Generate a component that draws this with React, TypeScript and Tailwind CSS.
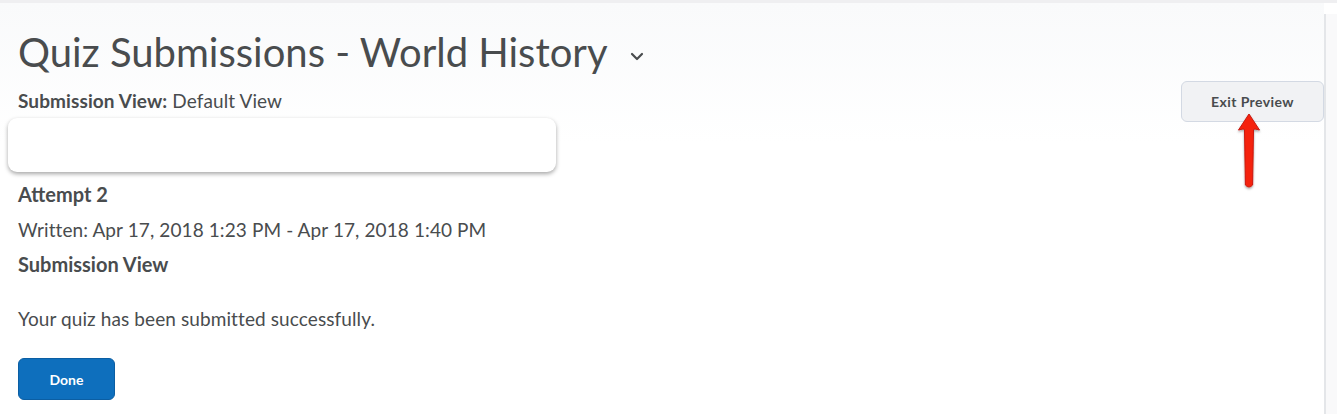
export default function App() {
  return (
    <div
      className="w-full h-[414px] bg-white flex flex-col text-[#494c4e] overflow-hidden"
      style={{ fontFamily: "Lato, 'Noto Sans', sans-serif" }}
    >
      <div className="h-[3px] bg-[#efeff1]" />
      <div className="flex flex-1">
        <div className="flex-1 relative flex bg-gradient-to-b from-[#f9fafb] to-white to-[140px]">
          <div className="flex-1">
            <div className="pl-[18px] pt-[25px]">
              <div className="flex items-center">
                <h1 className="text-[40px] leading-[48px] font-normal">
                  Quiz Submissions - World History
                </h1>
                <svg className="ml-[22px] mt-[8px]" width="14" height="9" viewBox="0 0 14 9">
                  <path d="M2 2l5 5 5-5" fill="none" stroke="#494c4e" strokeWidth="2.2" strokeLinecap="round" strokeLinejoin="round" />
                </svg>
              </div>
              <p className="mt-[13px] text-[19px] leading-[24px] tracking-[0.1px]">
                <span className="font-bold">Submission View:</span> Default View
              </p>
            </div>
            <div className="ml-[8px] mt-[5px] w-[548px] h-[54px] bg-white rounded-[9px] shadow-[0_2px_4px_rgba(0,0,0,0.35)]" />
            <div className="pl-[18px]">
              <p className="mt-[11px] text-[20px] leading-[22px] font-bold">Attempt 2</p>
              <p className="mt-[14px] text-[19px] leading-[22px] tracking-[0.1px]">
                Written: Apr 17, 2018 1:23 PM - Apr 17, 2018 1:40 PM
              </p>
              <p className="mt-[12px] text-[20px] leading-[22px] font-bold">Submission View</p>
              <p className="mt-[33px] text-[19px] leading-[22px] tracking-[0.1px]">
                Your quiz has been submitted successfully.
              </p>
              <button className="mt-[28px] w-[97px] h-[42px] rounded-[6px] bg-[#0e6fbd] border border-[#0b5ea3] text-white text-[14px] font-bold">
                Done
              </button>
            </div>
          </div>
          <div>
            <button className="mt-[78px] w-[143px] h-[41px] rounded-[6px] bg-[#f1f2f4] border border-[#d3d9e3] text-[14px] tracking-[0.4px] font-bold text-[#494c4e]">
              Exit Preview
            </button>
          </div>
          <svg
            className="absolute left-[1236px] top-[107px]"
            width="28"
            height="84"
            viewBox="0 0 28 84"
          >
            <defs>
              <filter id="sh" x="-50%" y="-20%" width="200%" height="140%">
                <feDropShadow dx="0" dy="1.5" stdDeviation="1.2" floodColor="#000" floodOpacity="0.35" />
              </filter>
            </defs>
            <path
              d="M13 4 L23.5 20 Q18 18.5 17.5 19.5 L16.6 75 Q13 79 9.4 75 L8.5 19.5 Q8 18.5 2.5 20 Z"
              fill="#f5230f"
              stroke="#c8170a"
              strokeWidth="1"
              strokeLinejoin="round"
              filter="url(#sh)"
            />
          </svg>
        </div>
        <div className="w-[13px] mt-[11px] border-l-2 border-[#e4e6e9] bg-[#f9f9fa]" />
      </div>
    </div>
  );
}
